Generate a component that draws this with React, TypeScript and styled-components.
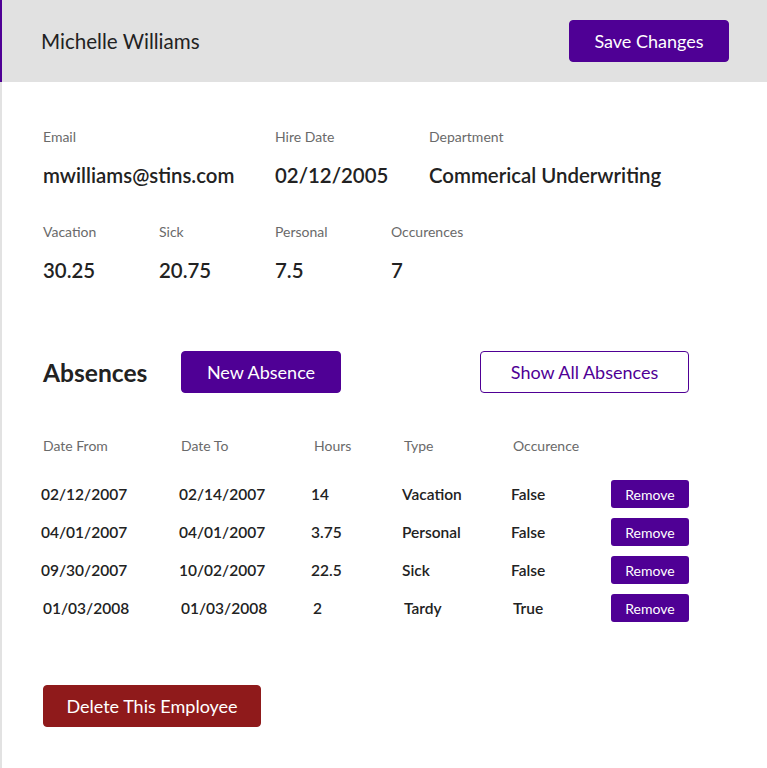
import * as React from 'react'
import styled, { createGlobalStyle } from 'styled-components'

const GlobalStyle = createGlobalStyle`
  body {
    margin: 0;
    font-family: Lato, 'Open Sans', sans-serif;
    color: #222;
    background: #fff;
  }
`

const purple = '#4f0095'

interface Absence {
  from: string
  to: string
  hours: string
  type: string
  occurence: string
}

const absences: Absence[] = [
  { from: '02/12/2007', to: '02/14/2007', hours: '14', type: 'Vacation', occurence: 'False' },
  { from: '04/01/2007', to: '04/01/2007', hours: '3.75', type: 'Personal', occurence: 'False' },
  { from: '09/30/2007', to: '10/02/2007', hours: '22.5', type: 'Sick', occurence: 'False' },
  { from: '01/03/2008', to: '01/03/2008', hours: '2', type: 'Tardy', occurence: 'True' }
]

const headColumns = [138, 133, 90, 109, 98]
const columns = [138, 132, 91, 109, 100]

const App = () => {
  return (
    <Page>
      <GlobalStyle />
      <Header>
        <Name>Michelle Williams</Name>
        <Button width={160}>Save Changes</Button>
      </Header>

      <Body>
        <InfoRow>
          <Field width={232}>
            <Label>Email</Label>
            <Value>mwilliams@stins.com</Value>
          </Field>
          <Field width={154}>
            <Label>Hire Date</Label>
            <Value>02/12/2005</Value>
          </Field>
          <Field>
            <Label>Department</Label>
            <Value>Commerical Underwriting</Value>
          </Field>
        </InfoRow>

        <InfoRow>
          <Field width={116}>
            <Label>Vacation</Label>
            <Value>30.25</Value>
          </Field>
          <Field width={116}>
            <Label>Sick</Label>
            <Value>20.75</Value>
          </Field>
          <Field width={116}>
            <Label>Personal</Label>
            <Value>7.5</Value>
          </Field>
          <Field>
            <Label>Occurences</Label>
            <Value>7</Value>
          </Field>
        </InfoRow>

        <SectionHead>
          <SectionTitle>Absences</SectionTitle>
          <Button width={160}>New Absence</Button>
          <Spacer />
          <Button width={209} outline>
            Show All Absences
          </Button>
        </SectionHead>

        <TableHead>
          {['Date From', 'Date To', 'Hours', 'Type', 'Occurence'].map((h, i) => (
            <HeadCell key={h} width={headColumns[i]}>
              {h}
            </HeadCell>
          ))}
        </TableHead>

        <TableBody>
          {absences.map((a, i) => (
            <TableRow key={i} shift={i === 3 ? 2 : 0}>
              {[a.from, a.to, a.hours, a.type, a.occurence].map((v, j) => (
                <Cell key={j} width={columns[j]}>
                  {v}
                </Cell>
              ))}
              <SmallButton shift={i === 3 ? -2 : 0}>Remove</SmallButton>
            </TableRow>
          ))}
        </TableBody>

        <Footer>
          <Button width={218} danger>
            Delete This Employee
          </Button>
        </Footer>
      </Body>
    </Page>
  )
}

const Page = styled.div`
  min-height: 768px;
  border-left: 2px solid #e2e2e2;
  box-sizing: border-box;
`

const Header = styled.div`
  height: 82px;
  background: #e1e1e1;
  display: flex;
  align-items: center;
  justify-content: space-between;
  padding: 0 38px 0 39px;
  margin-left: -2px;
  border-left: 2px solid ${purple};
`

const Name = styled.div`
  font-size: 20.6px;
  color: #222;
  margin-bottom: 1px;
`

const Button = styled.button<{ width: number; outline?: boolean; danger?: boolean }>`
  width: ${p => p.width}px;
  height: 42px;
  border-radius: 4px;
  font-family: Lato, sans-serif;
  font-size: 18px;
  cursor: pointer;
  border: 1px solid ${p => (p.danger ? '#8f1a1b' : purple)};
  background: ${p => (p.outline ? '#fff' : p.danger ? '#8f1a1b' : purple)};
  color: ${p => (p.outline ? purple : '#fff')};
`

const Body = styled.div`
  padding: 47px 0 0 41px;
`

const InfoRow = styled.div`
  display: flex;
  margin-bottom: 37px;
`

const Field = styled.div<{ width?: number }>`
  width: ${p => (p.width ? `${p.width}px` : 'auto')};
  display: flex;
  flex-direction: column;
`

const Label = styled.div`
  font-size: 14px;
  color: #6a6a6a;
  line-height: 16px;
`

const Value = styled.div`
  font-size: 20.4px;
  font-weight: 600;
  color: #222;
  line-height: 24px;
  margin-top: 18px;
`

const SectionHead = styled.div`
  display: flex;
  align-items: center;
  margin-top: 69px;
`

const SectionTitle = styled.div`
  font-size: 24.6px;
  font-weight: 700;
  color: #222;
  width: 138px;
`

const Spacer = styled.div`
  width: 139px;
`

const TableHead = styled.div`
  display: flex;
  margin-top: 45px;
`

const HeadCell = styled.div<{ width: number }>`
  width: ${p => p.width}px;
  font-size: 14px;
  color: #6a6a6a;
  line-height: 16px;
`

const TableBody = styled.div`
  margin-top: 21px;
`

const TableRow = styled.div<{ shift: number }>`
  display: flex;
  align-items: center;
  height: 38px;
  margin-left: ${p => p.shift - 2}px;
`

const Cell = styled.div<{ width: number }>`
  width: ${p => p.width}px;
  font-size: 15.5px;
  font-weight: 600;
  color: #222;
`

const SmallButton = styled.button<{ shift: number }>`
  width: 78px;
  height: 28px;
  border: none;
  border-radius: 3px;
  background: ${purple};
  color: #fff;
  font-family: Lato, sans-serif;
  font-size: 14px;
  margin-left: ${p => p.shift}px;
  cursor: pointer;
`

const Footer = styled.div`
  margin-top: 58px;
`

export default App
